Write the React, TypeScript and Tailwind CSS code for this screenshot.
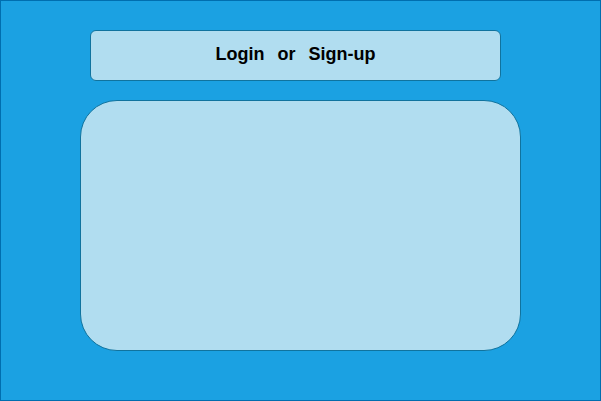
export default function App() {
  return (
    <div className="w-[601px] h-[401px] bg-[#1ba1e2] border border-[#006eaf] flex flex-col items-center pt-[29px] font-['Liberation_Sans',Arial,sans-serif]">
      {/* header bar */}
      <div className="w-[411px] h-[51px] ml-[-10px] pb-[3px] bg-[#b1ddf0] border border-[#10739e] rounded-[6px] flex items-center justify-center">
        <span className="text-[18px] leading-none font-bold text-black [word-spacing:8px]">Login or Sign-up</span>
      </div>
      {/* content panel */}
      <div className="mt-[19px] w-[441px] h-[251px] bg-[#b1ddf0] border border-[#10739e] rounded-[37px]" />
    </div>
  );
}
